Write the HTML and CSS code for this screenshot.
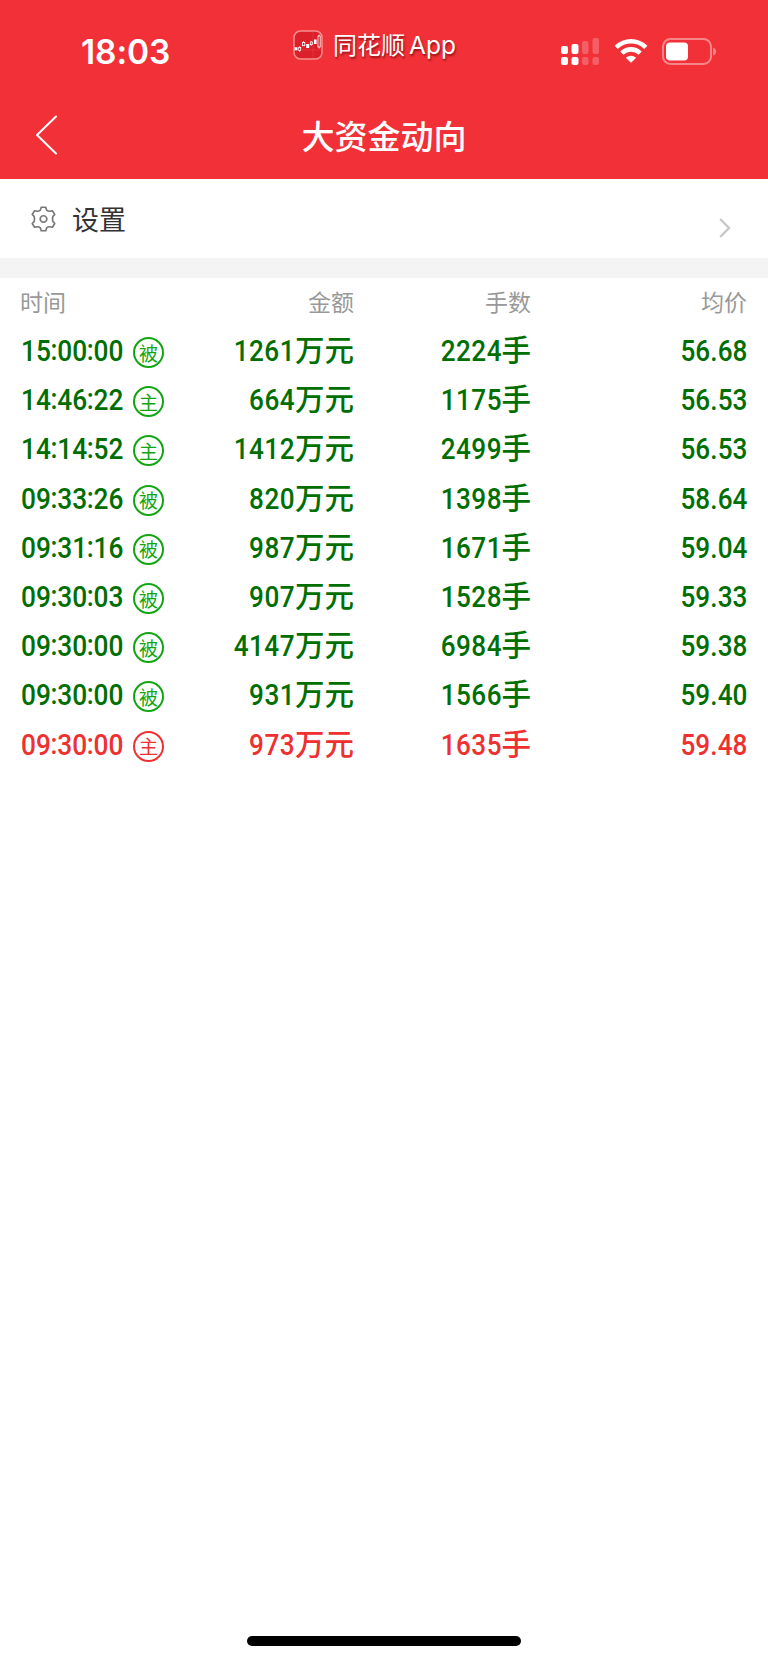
FILE: index.html
```html
<!DOCTYPE html>
<html lang="zh-CN">
<head>
<meta charset="utf-8">
<title>大资金动向</title>
<link rel="stylesheet" href="styles.css">
</head>
<body>
<div class="screen">
  <header class="top">
    <div class="status">
      <div class="clock">18:03</div>
      <div class="brand">
        <svg class="brand-icon" width="30" height="30" viewBox="0 0 30 30">
          <rect x="1" y="1" width="28" height="28" rx="6.5" fill="#dc2029" stroke="#f98e90" stroke-width="1.5"/>
          <path d="M2 20H28M20 2V28" stroke="#e8404a" stroke-width=".6"/>
          <g fill="#fff"><rect x="1.5" y="17.3" width="3" height="3"/><rect x="13.2" y="14" width="3" height="4"/><rect x="21" y="9.5" width="2.6" height="4.5"/></g>
          <g fill="#dc2029" stroke="#fff" stroke-width=".8"><path d="M6.7 16V22M10.6 11V16M18.3 11V16M26.1 4.5V18.5"/><rect x="5.7" y="17.5" width="2" height="3"/><rect x="9.5" y="12.5" width="2.3" height="3.2"/><rect x="17.3" y="12" width="2" height="2.6"/><rect x="25" y="6" width="2.2" height="11"/></g>
        </svg>
        <span class="brand-name">同花顺<span class="latin">App</span></span>
      </div>
      <div class="indicators">
        <svg width="40" height="28" viewBox="0 0 40 28" fill="#fff">
          <rect x="1" y="9" width="7" height="8" rx="2"/><rect x="1" y="20" width="7" height="8" rx="2"/>
          <rect x="11.5" y="7" width="7" height="10" rx="2"/><rect x="11.5" y="20" width="7" height="8" rx="2"/>
          <g opacity=".22"><rect x="22" y="4" width="6.5" height="13" rx="2"/><rect x="22" y="20" width="6.5" height="8" rx="2"/><rect x="32.5" y="1" width="6.5" height="16" rx="2"/><rect x="32.5" y="20" width="6.5" height="8" rx="2"/></g>
        </svg>
        <svg class="wifi" width="34" height="26" viewBox="0 0 34 26" fill="none" stroke="#fff" stroke-width="4.6">
          <path d="M2.2 9.3C10.8 1.2 23.2 1.2 31.8 9.3"/>
          <path d="M7.8 15.2C13.2 10.1 20.8 10.1 26.2 15.2"/>
          <path d="M17 24.8 11.8 19.7Q17 15.6 22.2 19.7Z" fill="#fff" stroke="none"/>
        </svg>
        <svg class="battery" width="55" height="27" viewBox="0 0 55 27">
          <rect x="1" y="1" width="48" height="25" rx="7.5" fill="none" stroke="#fff" stroke-opacity=".42" stroke-width="2"/>
          <path d="M51 9.5Q54 10.5 54 13.5T51 17.5Z" fill="#fff" opacity=".42"/>
          <rect x="4" y="4.5" width="22" height="18" rx="4" fill="#fff"/>
        </svg>
      </div>
    </div>
    <nav class="nav">
      <svg class="back" width="24" height="42" viewBox="0 0 24 42" fill="none" stroke="#fff" stroke-width="2" stroke-linecap="round" stroke-linejoin="round"><path d="M21 2.5 2 21 21 39.5"/></svg>
      <h1 class="title">大资金动向</h1>
    </nav>
  </header>
  <section class="settings">
    <svg class="gear" width="25" height="26" viewBox="0 0 24 26" preserveAspectRatio="none" fill="none" stroke="#777" stroke-width="1.6" stroke-linejoin="round">
      <path d="M9.8 1.3H14.2L15 4.1Q16.4 5.4 18 5.3L20.5 4.7 22.8 8.5 21 10.6Q20.2 13 21 15.4L22.8 17.5 20.5 21.3 18 20.7Q16.4 20.6 15 21.9L14.2 24.7H9.8L9 21.9Q7.6 20.6 6 20.7L3.5 21.3 1.2 17.5 3 15.4Q3.8 13 3 10.6L1.2 8.5 3.5 4.7 6 5.3Q7.6 5.4 9 4.1Z"/>
      <circle cx="12" cy="13" r="3.2"/>
    </svg>
    <span class="settings-label">设置</span>
    <svg class="more" width="12" height="20" viewBox="0 0 12 20" fill="none" stroke="#c8c8c8" stroke-width="2.4"><path d="M1.2 1 10 10 1.2 19"/></svg>
  </section>
  <main class="table">
    <div class="row head"><span>时间</span><span>金额</span><span>手数</span><span>均价</span></div>
    <div class="row"><span class="time"><span class="digits">15<i>:</i>00<i>:</i>00</span><b class="tag">被</b></span><span><b class="n">1261</b><em>万元</em></span><span><b class="n">2224</b><em>手</em></span><span><b class="n price">56.68</b></span></div>
    <div class="row"><span class="time"><span class="digits">14<i>:</i>46<i>:</i>22</span><b class="tag">主</b></span><span><b class="n">664</b><em>万元</em></span><span><b class="n">1175</b><em>手</em></span><span><b class="n price">56.53</b></span></div>
    <div class="row"><span class="time"><span class="digits">14<i>:</i>14<i>:</i>52</span><b class="tag">主</b></span><span><b class="n">1412</b><em>万元</em></span><span><b class="n">2499</b><em>手</em></span><span><b class="n price">56.53</b></span></div>
    <div class="row"><span class="time"><span class="digits">09<i>:</i>33<i>:</i>26</span><b class="tag">被</b></span><span><b class="n">820</b><em>万元</em></span><span><b class="n">1398</b><em>手</em></span><span><b class="n price">58.64</b></span></div>
    <div class="row"><span class="time"><span class="digits">09<i>:</i>31<i>:</i>16</span><b class="tag">被</b></span><span><b class="n">987</b><em>万元</em></span><span><b class="n">1671</b><em>手</em></span><span><b class="n price">59.04</b></span></div>
    <div class="row"><span class="time"><span class="digits">09<i>:</i>30<i>:</i>03</span><b class="tag">被</b></span><span><b class="n">907</b><em>万元</em></span><span><b class="n">1528</b><em>手</em></span><span><b class="n price">59.33</b></span></div>
    <div class="row"><span class="time"><span class="digits">09<i>:</i>30<i>:</i>00</span><b class="tag">被</b></span><span><b class="n">4147</b><em>万元</em></span><span><b class="n">6984</b><em>手</em></span><span><b class="n price">59.38</b></span></div>
    <div class="row"><span class="time"><span class="digits">09<i>:</i>30<i>:</i>00</span><b class="tag">被</b></span><span><b class="n">931</b><em>万元</em></span><span><b class="n">1566</b><em>手</em></span><span><b class="n price">59.40</b></span></div>
    <div class="row buy"><span class="time"><span class="digits">09<i>:</i>30<i>:</i>00</span><b class="tag">主</b></span><span><b class="n">973</b><em>万元</em></span><span><b class="n">1635</b><em>手</em></span><span><b class="n price">59.48</b></span></div>
  </main>
  <div class="home-bar"></div>
</div>
</body>
</html>
```
FILE: styles.css
```css
* { box-sizing: border-box; }
body { margin: 0; background: #fff; font-family: "Noto Sans CJK SC", sans-serif; }
.screen { width: 768px; height: 1663px; display: flex; flex-direction: column; overflow: hidden; }
.top { height: 179px; flex: none; background: #f23038; color: #fff; }
.status { height: 94px; display: grid; grid-template-columns: 293px 1fr 220px; align-items: start; }
.clock { padding: 30px 0 0 81px; font: 600 33.5px/44px Inter, sans-serif; letter-spacing: -.1px; }
.brand { display: flex; gap: 10px; padding-top: 28px; }
.brand-icon { margin-top: 2px; }
.brand-name { font-size: 24px; line-height: 32px; text-shadow: 1px 2px 2px rgba(90, 0, 0, .6); }
.latin { font-family: Inter, sans-serif; font-size: 24.5px; margin-left: 4px; }
.indicators { display: flex; align-items: flex-start; padding: 37px 0 0 12px; }
.wifi { margin: 1px 0 0 14px; }
.battery { margin: 1px 0 0 14px; }
.nav { height: 85px; display: grid; grid-template-columns: 192px 384px 192px; align-items: start; }
.back { margin: 20px 0 0 35px; }
.title { margin: 17px 0 0; text-align: center; font-size: 33px; line-height: 48px; font-weight: 500; }
.settings { height: 79px; flex: none; display: flex; align-items: flex-start; padding: 0 37px 0 31px; color: #333; }
.gear { margin-top: 27px; }
.settings-label { margin: 20px 0 0 16px; font-size: 27px; line-height: 40px; }
.more { margin: 39px 0 0 auto; }
.table { flex: 1; border-top: 20px solid #f4f4f4; padding: 0 21px 0 20px; }
.row { height: 49.2px; display: grid; grid-template-columns: 160px 174px 177px 1fr; align-items: center; color: #006e00; font: 500 29px/49.2px Roboto, "Noto Sans CJK SC", sans-serif; text-align: right; }
.row > :first-child { text-align: left; }
.row em { font: 500 29.5px/1 "Noto Sans CJK SC", sans-serif; }
.n { display: inline-block; font-weight: 500; letter-spacing: .5px; transform: scaleX(.9); transform-origin: right; }
.price { letter-spacing: .1px; }
.row.head { height: 49px; color: #999; font: 400 23px/47px "Noto Sans CJK SC", sans-serif; align-items: start; }
.time { display: flex; align-items: center; }
.digits { display: flex; flex: none; width: 104px; padding-left: 1px; white-space: nowrap; letter-spacing: .1px; transform: scaleX(.905); transform-origin: left; }
.digits i { flex: none; font-style: normal; width: 6.9px; display: flex; justify-content: center; margin-top: -1px; }
.tag { flex: none; width: 31px; height: 31px; margin: 2px 0 0 9px; border: 2px solid currentColor; border-radius: 50%; display: grid; place-items: center; color: #12a512; font: 400 19px/22px "Noto Sans CJK SC", sans-serif; }
.buy, .buy .tag { color: #ee3031; }
.home-bar { flex: none; align-self: center; width: 274px; height: 10px; margin-bottom: 17px; border-radius: 5px; background: #000; }
```
